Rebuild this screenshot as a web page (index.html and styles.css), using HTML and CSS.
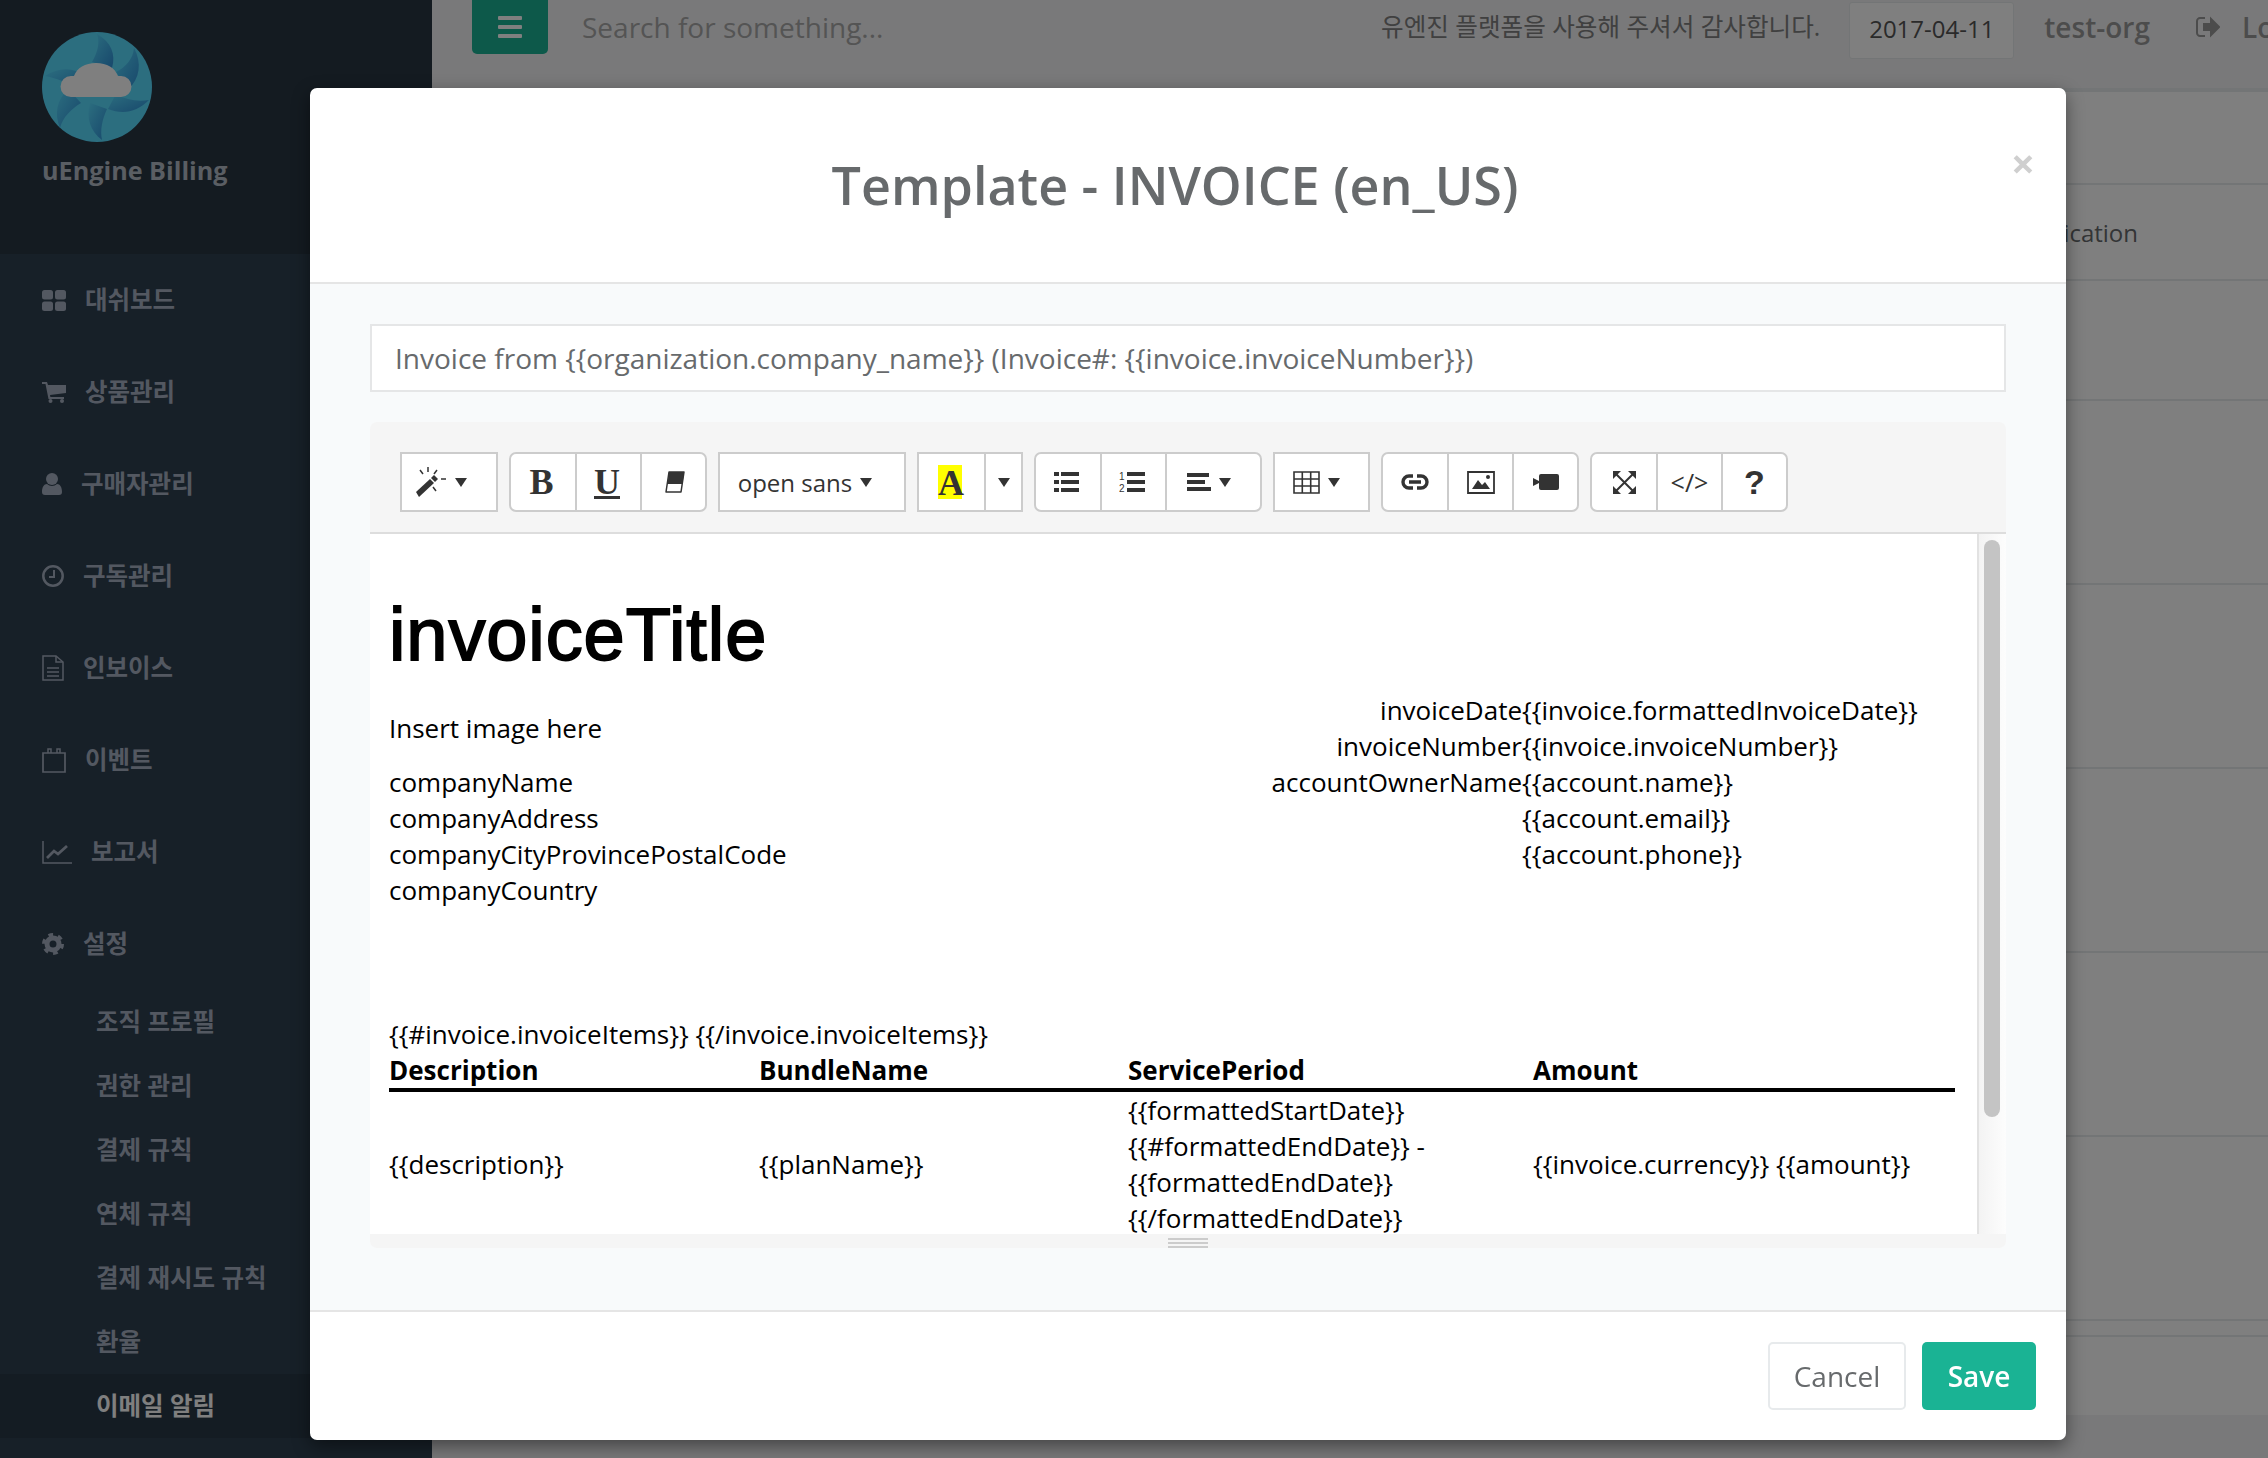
FILE: index.html
```html
<!DOCTYPE html>
<html>
<head>
<meta charset="utf-8">
<title>uEngine Billing - Email templates</title>
<link rel="stylesheet" href="styles.css">
</head>
<body>

<div class="app">
  <nav class="sidebar">
    <div class="nav-header">
      <svg class="logo" viewBox="0 0 110 110" width="110" height="110">
        <defs>
          <linearGradient id="blade" x1="0" y1="0" x2="1" y2="1">
            <stop offset="0" stop-color="#58dcff"/>
            <stop offset="1" stop-color="#3090d8"/>
          </linearGradient>
        </defs>
        <circle cx="55" cy="55" r="55" fill="#58dcff"/>
        <path d="M55 2c14 8 19 20 15 34l-20-6C56 20 58 10 55 2z" fill="url(#blade)"/>
        <path d="M92 16c8 15 6 30-6 42L74 40c10-5 17-13 18-24z" fill="url(#blade)"/>
        <path d="M107 68c-12 12-26 15-41 9l8-15c10 6 22 8 33 6z" fill="url(#blade)"/>
        <path d="M60 108c-12-9-16-22-12-37l17 6c-5 11-7 21-5 31z" fill="url(#blade)"/>
        <path d="M18 96c-6-15-3-28 8-39l13 14c-10 6-18 14-21 25z" fill="url(#blade)"/>
        <path d="M3 44c14-9 28-9 41 0l-10 14C26 50 14 46 3 44z" fill="url(#blade)"/>
        <path d="M29 65a10.500 10.500 0 0 1 0-21h3C35 36 43 31 54 31s19 5 22 13h3a10.500 10.500 0 0 1 0 21z" fill="#fff"/>
      </svg>
      <div class="brand">uEngine Billing</div>
    </div>
    <ul class="nav">
      <li><svg width="24" height="21" viewBox="0 0 24 21"><rect width="11" height="9.500" rx="2.500"/><rect x="13" width="11" height="9.500" rx="2.500"/><rect y="11.500" width="11" height="9.500" rx="2.500"/><rect x="13" y="11.500" width="11" height="9.500" rx="2.500"/></svg><span>대쉬보드</span></li>
      <li><svg width="24" height="22" viewBox="0 0 24 22"><path d="M0 1h5l1 3h18v8L8 14l.4 2H22v2H6.500L3.500 3H0z"/><circle cx="8.500" cy="20" r="2"/><circle cx="20" cy="20" r="2"/></svg><span>상품관리</span></li>
      <li><svg width="20" height="22" viewBox="0 0 20 22"><circle cx="10" cy="6" r="6"/><path d="M0 19c0-5 2-8 5-8 1.500 1 3 2 5 2s3.500-1 5-2c3 0 5 3 5 8 0 2-1 3-3 3H3c-2 0-3-1-3-3z"/></svg><span>구매자관리</span></li>
      <li><svg width="22" height="22" viewBox="0 0 22 22" class="line"><circle cx="11" cy="11" r="9.700" stroke-width="2.500"/><path d="M12 5v7H7" stroke-width="2"/></svg><span>구독관리</span></li>
      <li><svg width="22" height="26" viewBox="0 0 22 26" class="line" stroke-width="1.500"><path d="M1 1h13l7 6v18H1z"/><path d="M14 1v6h7M5 13h12M5 17h12M5 21h12"/></svg><span>인보이스</span></li>
      <li><svg width="24" height="26" viewBox="0 0 24 26" class="line" stroke-width="1.700"><path d="M1 6h22v19H1z"/><path d="M6 6V2h3v4M15 6V2h3v4" stroke-width="1.500"/></svg><span>이벤트</span></li>
      <li><svg width="30" height="23" viewBox="0 0 30 23" class="line" stroke-width="1.500"><path d="M1 0v22h29"/><path d="M5 17l7-7 4 3 9-8" stroke-width="2.800"/></svg><span>보고서</span></li>
      <li><svg width="22" height="22" viewBox="0 0 22 22" class="line"><circle cx="11" cy="11" r="6" stroke-width="5"/><circle cx="11" cy="11" r="9" stroke-width="4" stroke-dasharray="4.500 4.930"/></svg><span>설정</span></li>
    </ul>
    <ul class="sub-nav">
      <li>조직 프로필</li>
      <li>권한 관리</li>
      <li>결제 규칙</li>
      <li>연체 규칙</li>
      <li>결제 재시도 규칙</li>
      <li>환율</li>
      <li class="active">이메일 알림</li>
    </ul>
  </nav>

  <main class="main">
    <header class="topbar">
      <button class="menu-btn"><span></span><span></span><span></span></button>
      <div class="search">Search for something...</div>
      <div class="welcome">유엔진 플랫폼을 사용해 주셔서 감사합니다.</div>
      <div class="date">2017-04-11</div>
      <div class="org">test-org</div>
      <div class="logout">
        <svg width="24" height="22" viewBox="0 0 24 22" class="line" stroke-width="2"><path d="M9 2H4C2.500 2 1 3.500 1 5v12c0 1.500 1.500 3 3 3h5"/><path d="M8 8h7V3l8 8-8 8v-5H8z"/></svg>
        <span>Log out</span>
      </div>
    </header>
    <section class="panel">
      <div class="row row-1"></div>
      <div class="row row-2">Notification</div>
      <div class="row row-3"></div>
      <div class="row row-4"></div>
      <div class="row row-4"></div>
      <div class="row row-4"></div>
      <div class="row row-4"></div>
      <div class="row row-4"></div>
      <div class="row row-5"></div>
      <div class="row row-6"></div>
    </section>
  </main>
</div>

<div class="backdrop"></div>

<div class="modal">
  <div class="modal-header">
    <h4 class="modal-title">Template - INVOICE (en_US)</h4>
    <span class="close">×</span>
  </div>

  <div class="modal-body">
    <div class="subject">Invoice from {{organization.company_name}} (Invoice#: {{invoice.invoiceNumber}})</div>

    <div class="editor">
      <div class="toolbar">
        <div class="btn-group square">
          <div class="btn w94 shift-16">
            <svg width="32" height="32" viewBox="0 0 32 32"><path d="M1 26l14-13 4 4L4 31z" fill="#333"/><path d="M16 12l3-3 4 4-3 3z" fill="#333"/><path d="M13 1v5M5 4l3 4M22 4l-3 4M21 25l-3-4M26 13h5" stroke="#333" stroke-width="1.500"/></svg>
            <i class="caret"></i>
          </div>
        </div>
        <div class="btn-group">
          <div class="btn serif shift-3">B</div>
          <div class="btn serif under shift-3">U</div>
          <div class="btn">
            <svg width="22" height="22" viewBox="0 0 22 22"><path d="M6 1h15l-3 20H3z" fill="#fff" stroke="#333" stroke-width="1.500" stroke-linejoin="round"/><path d="M6 1h15l-1.500 12H4.500z" fill="#333"/></svg>
          </div>
        </div>
        <div class="btn-group square">
          <div class="btn w184 shift-12"><span class="font-name">open sans</span><i class="caret"></i></div>
        </div>
        <div class="btn-group square">
          <div class="btn w65 shift-3"><span class="color-a">A</span></div>
          <div class="btn w37"><i class="caret"></i></div>
        </div>
        <div class="btn-group">
          <div class="btn shift-3">
            <svg width="25" height="20" viewBox="0 0 25 20" fill="#333"><rect y="0" width="5" height="4"/><rect x="7" y="0" width="18" height="4"/><rect y="8" width="5" height="4"/><rect x="7" y="8" width="18" height="4"/><rect y="16" width="5" height="4"/><rect x="7" y="16" width="18" height="4"/></svg>
          </div>
          <div class="btn shift-3">
            <svg width="26" height="23" viewBox="0 0 26 23" fill="#333"><rect x="8" y="1" width="18" height="4"/><rect x="8" y="9" width="18" height="4"/><rect x="8" y="17" width="18" height="4"/><text x="0" y="9" class="ol-num">1</text><text x="0" y="21" class="ol-num">2</text></svg>
          </div>
          <div class="btn w95 shift-10">
            <svg width="24" height="20" viewBox="0 0 24 20" fill="#333"><rect y="1" width="22" height="4"/><rect y="8" width="18" height="4"/><rect y="15" width="24" height="4"/></svg>
            <i class="caret"></i>
          </div>
        </div>
        <div class="btn-group square">
          <div class="btn w93 shift-10">
            <svg width="27" height="23" viewBox="0 0 27 23" fill="none" stroke="#333" stroke-width="1.600"><path d="M1 1h25v21H1zM1 8h25M1 15h25M9.300 1v21M17.700 1v21"/></svg>
            <i class="caret"></i>
          </div>
        </div>
        <div class="btn-group">
          <div class="btn">
            <svg width="28" height="16" viewBox="0 0 28 16" fill="none" stroke="#333" stroke-width="3.400"><path d="M12 2H8a6 6 0 0 0 0 12h4M16 2h4a6 6 0 0 1 0 12h-4M8 8h12"/></svg>
          </div>
          <div class="btn">
            <svg width="28" height="23" viewBox="0 0 28 23"><path d="M1 1h26v21H1z" fill="#fff" stroke="#333" stroke-width="1.800"/><path d="M5 18l6-9 4 5 3-3 5 7z" fill="#333"/><circle cx="21" cy="6" r="2" fill="#333"/></svg>
          </div>
          <div class="btn">
            <svg width="26" height="16" viewBox="0 0 26 16" fill="#333"><path d="M0 4l6 3V2a2 2 0 0 1 2-2h16a2 2 0 0 1 2 2v12a2 2 0 0 1-2 2H8a2 2 0 0 1-2-2V9l-6 3z"/></svg>
          </div>
        </div>
        <div class="btn-group">
          <div class="btn">
            <svg width="23" height="23" viewBox="0 0 23 23" fill="none" stroke="#333" stroke-width="2"><path d="M3 3l17 17M20 3L3 20"/><path d="M0 0h8L0 8zM23 0h-8l8 8zM0 23h8l-8-8zM23 23h-8l8-8z" fill="#333" stroke="none"/></svg>
          </div>
          <div class="btn code">&lt;/&gt;</div>
          <div class="btn help">?</div>
        </div>
      </div>

      <div class="edit-area">
        <div class="doc">
          <h1 class="doc-title">invoiceTitle</h1>
          <div class="doc-head">
            <div class="image-note">Insert image here</div>
            <div class="lbl">invoiceDate</div><div class="val">{{invoice.formattedInvoiceDate}}</div>
            <div class="lbl">invoiceNumber</div><div class="val">{{invoice.invoiceNumber}}</div>
            <div>companyName</div>
            <div class="lbl">accountOwnerName</div><div class="val">{{account.name}}</div>
            <div>companyAddress</div>
            <div class="lbl"></div><div class="val">{{account.email}}</div>
            <div>companyCityProvincePostalCode</div>
            <div class="lbl"></div><div class="val">{{account.phone}}</div>
            <div>companyCountry</div>
          </div>
          <div class="items-tag">{{#invoice.invoiceItems}} {{/invoice.invoiceItems}}</div>
          <table class="items">
            <thead>
              <tr><th class="c1">Description</th><th class="c2">BundleName</th><th class="c3">ServicePeriod</th><th>Amount</th></tr>
            </thead>
            <tbody>
              <tr>
                <td>{{description}}</td>
                <td>{{planName}}</td>
                <td>{{formattedStartDate}}<br>{{#formattedEndDate}} -<br>{{formattedEndDate}}<br>{{/formattedEndDate}}</td>
                <td>{{invoice.currency}} {{amount}}</td>
              </tr>
            </tbody>
          </table>
        </div>
        <div class="scrollbar"><div class="thumb"></div></div>
      </div>

      <div class="statusbar"><div class="grip"></div></div>
    </div>
  </div>

  <div class="modal-footer">
    <button class="btn-white">Cancel</button>
    <button class="btn-save">Save</button>
  </div>
</div>

</body>
</html>
```

FILE: styles.css
```css
* {
   box-sizing: border-box;
}

html, body {
   margin: 0;
   height: 100%;
   overflow: hidden;
}

body {
   font-family: "Open Sans", "Noto Sans CJK KR", sans-serif;
   font-size: 24px;
   color: #676a6c;
   background-color: #f3f3f4;
}

ul {
   list-style: none;
   margin: 0;
   padding: 0;
}

.app {
   display: flex;
   height: 1458px;
}

/* sidebar */
.sidebar {
   flex: 0 0 432px;
   background-color: #2f4050;
   color: #a7b1c2;
   font-size: 24.500px;
   font-weight: 600;
}

.nav-header {
   height: 254px;
   padding: 32px 0 0 42px;
   background-color: #283643;
}

.logo {
   display: block;
}

.brand {
   margin-top: 11px;
   font-size: 25.200px;
   font-weight: 700;
   color: #b5bcc7;
}

.nav li {
   display: flex;
   align-items: center;
   gap: 19px;
   height: 92px;
   padding-left: 42px;
}

.nav li span {
   margin-top: -3px;
}

.nav svg {
   fill: currentColor;
}

.nav svg.line {
   fill: none;
   stroke: currentColor;
}

.sub-nav li {
   height: 64px;
   line-height: 64px;
   padding-left: 96px;
}

.sub-nav li.active {
   background-color: #293846;
   color: #fff;
   font-weight: 700;
}

/* page under the modal */
.main {
   flex: 1;
   min-width: 0;
   overflow: hidden;
}

.topbar {
   display: flex;
   height: 92px;
   padding-left: 40px;
   border-bottom: 4px solid #e7eaec;
   background-color: #f3f3f4;
   white-space: nowrap;
}

.menu-btn {
   flex: none;
   display: flex;
   flex-direction: column;
   justify-content: center;
   align-items: center;
   gap: 5px;
   width: 76px;
   height: 54px;
   padding: 0;
   border: 0;
   border-radius: 0 0 5px 5px;
   background-color: #1ab394;
}

.menu-btn span {
   width: 24px;
   height: 4px;
   border-radius: 1px;
   background-color: #fff;
}

.search {
   flex: 0 0 833px;
   height: 54px;
   padding-left: 34px;
   font-size: 28px;
   line-height: 54px;
   color: #a9a9a9;
}

.welcome {
   flex: none;
   height: 54px;
   line-height: 54px;
   font-size: 24.600px;
   color: #808080;
}

.date {
   flex: none;
   width: 165px;
   height: 57px;
   margin: 2px 30px 0 29px;
   border: 1px solid #e7eaec;
   border-radius: 3px;
   background-color: #fff;
   text-align: center;
   font-size: 24px;
   line-height: 52px;
   color: #555;
}

.org {
   flex: none;
   height: 54px;
   margin-right: 46px;
   line-height: 54px;
   font-size: 28px;
   font-weight: 600;
   color: #999;
}

.logout {
   flex: none;
   display: flex;
   align-items: center;
   gap: 22px;
   height: 54px;
   font-size: 28px;
   font-weight: 600;
   color: #999;
}

.logout svg {
   fill: currentColor;
   stroke: currentColor;
}

.logout svg path:first-child {
   fill: none;
}

.panel {
   height: 1323px;
   background-color: #fff;
}

.row {
   border-bottom: 2px solid #e7eaec;
}

.row-1 { height: 93px; }
.row-2 {
   height: 96px;
   padding-right: 130px;
   text-align: right;
   line-height: 96px;
}
.row-3 { height: 120px; }
.row-4 { height: 184px; }
.row-5 { height: 16px; }
.row-6 { height: 79px; border-bottom: 0; }

.backdrop {
   position: fixed;
   inset: 0;
   background-color: rgba(0, 0, 0, .5);
}

/* modal */
.modal {
   position: absolute;
   left: 310px;
   top: 88px;
   display: flex;
   flex-direction: column;
   width: 1756px;
   height: 1352px;
   border-radius: 7px;
   background-color: #fff;
   box-shadow: 0 6px 18px rgba(0, 0, 0, .45);
}

.modal-header {
   position: relative;
   flex: none;
   height: 196px;
   border-bottom: 2px solid #e5e5e5;
}

.modal-title {
   margin: 0;
   padding: 66px 26px 0 0;
   text-align: center;
   font-size: 52px;
   line-height: 62px;
   font-weight: 600;
   color: #676a6c;
}

.close {
   position: absolute;
   right: 31px;
   top: 52px;
   font-size: 42px;
   line-height: 46px;
   font-weight: 700;
   color: #cfcfcf;
}

.modal-body {
   flex: 1;
   padding: 40px 60px 0;
   background-color: #f8fafb;
}

.subject {
   height: 68px;
   padding-left: 23px;
   border: 2px solid #e5e6e7;
   background-color: #fff;
   font-size: 28px;
   line-height: 65px;
   white-space: nowrap;
}

.editor {
   margin-top: 30px;
   border-radius: 7px;
   background-color: #f5f5f5;
}

.toolbar {
   display: flex;
   gap: 11px;
   height: 112px;
   padding: 30px 0 0 30px;
   border-bottom: 2px solid #ddd;
}

.btn-group {
   display: flex;
   height: 60px;
   border: 2px solid #ccc;
   border-radius: 7px;
   background-color: #fff;
}

.btn-group.square {
   border-radius: 0;
}

.btn {
   display: flex;
   align-items: center;
   justify-content: center;
   gap: 8px;
   width: 65px;
   border-left: 2px solid #ccc;
   color: #333;
}

.btn:first-child {
   border-left: 0;
   width: 64px;
}

.btn.w94:first-child { width: 94px; }
.btn.w184:first-child { width: 184px; }
.btn.w65:first-child { width: 65px; }
.btn.w37 { width: 37px; }
.btn.w95 { width: 95px; }
.btn.w93:first-child { width: 93px; }

.shift-3 { padding-right: 3px; }
.shift-10 { padding-right: 10px; }
.shift-12 { padding-right: 14px; }
.shift-16 { padding-right: 16px; }

.caret {
   width: 0;
   height: 0;
   border-style: solid;
   border-width: 9px 6px 0;
   border-color: #333 transparent transparent;
}

.serif {
   font-family: "Liberation Serif", serif;
   font-size: 36px;
   font-weight: 700;
}

.under {
   text-decoration: underline;
   text-underline-offset: 2px;
}

.font-name {
   font-size: 24px;
   color: #333;
}

.color-a {
   width: 24px;
   height: 34px;
   background-color: #ff0;
   text-align: center;
   font-family: "Liberation Serif", serif;
   font-size: 36px;
   line-height: 36px;
   font-weight: 700;
   color: #333;
}

.ol-num {
   font-family: "Liberation Sans", sans-serif;
   font-size: 10px;
}

.code {
   font-size: 25px;
}

.help {
   font-family: "Liberation Sans", sans-serif;
   font-size: 34px;
   font-weight: 700;
}

.edit-area {
   display: flex;
   height: 700px;
   background-color: #fff;
   overflow: hidden;
}

.doc {
   flex: 1;
   min-width: 0;
   padding: 61px 22px 0 19px;
   font-size: 26px;
   line-height: 36px;
   color: #000;
}

.doc-title {
   margin: 0 0 17px;
   font-family: "Liberation Sans", Arial, sans-serif;
   font-size: 74px;
   line-height: 80px;
   font-weight: 400;
   letter-spacing: .9px;
   -webkit-text-stroke: 1.800px #000;
}

.doc-head {
   display: grid;
   grid-template-columns: auto 1fr 433px;
   grid-auto-rows: 36px;
}

.image-note {
   grid-row: span 2;
   align-self: center;
}

.lbl {
   text-align: right;
}

.items-tag {
   margin-top: 108px;
}

.items {
   width: 100%;
   table-layout: fixed;
   border-collapse: collapse;
}

.items th {
   padding: 0;
   border-bottom: 4px solid #000;
   text-align: left;
   font-weight: 700;
}

.items td {
   padding: 0;
   vertical-align: middle;
}

.c1 { width: 370px; }
.c2 { width: 369px; }
.c3 { width: 405px; }

.scrollbar {
   flex: 0 0 29px;
   padding: 6px 6px 0 5px;
   border-left: 2px solid #e2e2e2;
   background: linear-gradient(to right, #f3f3f3, #fdfdfd);
}

.thumb {
   height: 577px;
   border-radius: 8px;
   background-color: #c4c4c4;
}

.statusbar {
   height: 14px;
   padding-top: 4px;
}

.grip {
   width: 40px;
   height: 10px;
   margin-left: 798px;
   border-top: 2px solid #ccc;
   border-bottom: 2px solid #ccc;
   background: linear-gradient(#ccc, #ccc) 0 2px / 100% 2px no-repeat;
}

.modal-footer {
   display: flex;
   flex: none;
   justify-content: flex-end;
   gap: 16px;
   height: 130px;
   padding: 30px 30px 0 0;
   border-top: 2px solid #e5e5e5;
}

.modal-footer button {
   height: 68px;
   border-radius: 5px;
   font-family: "Open Sans", sans-serif;
   font-size: 28px;
}

.btn-white {
   width: 138px;
   border: 2px solid #e7eaec;
   background-color: #fff;
   color: #676a6c;
}

.btn-save {
   width: 114px;
   border: 0;
   background-color: #1ab394;
   font-weight: 600;
   color: #fff;
}
```
